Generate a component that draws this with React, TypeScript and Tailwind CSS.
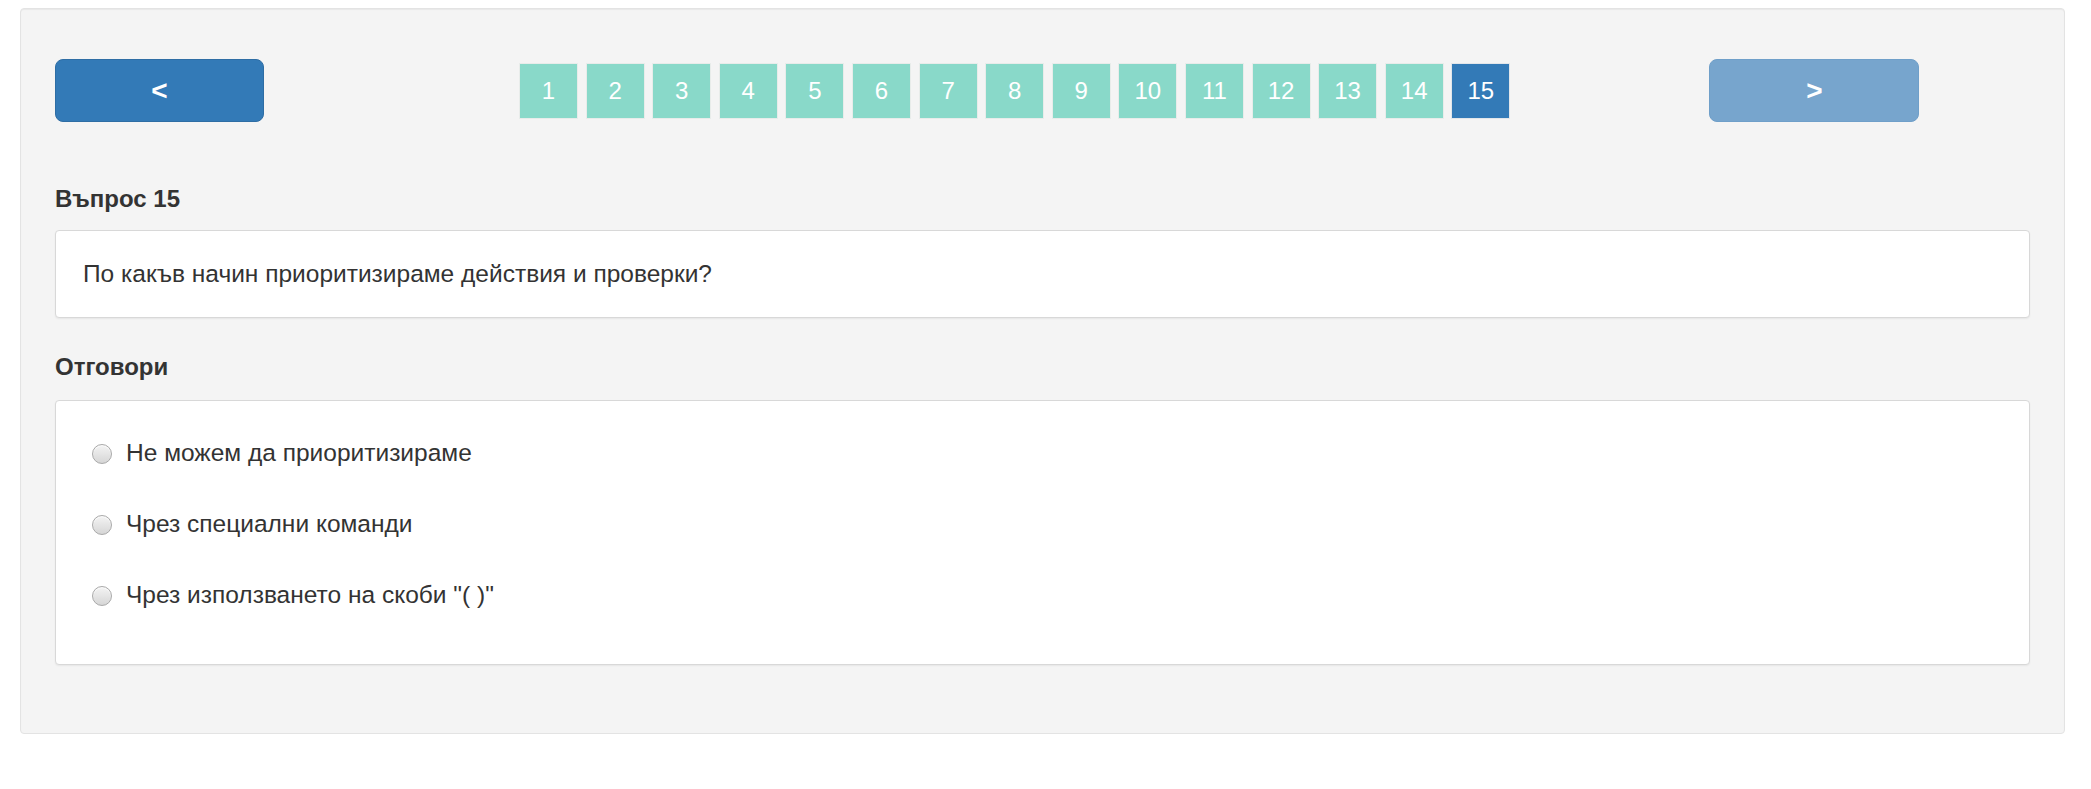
const pages = Array.from({ length: 15 }, (_, i) => i + 1);
const current = 15;

const answers = [
  "Не можем да приоритизираме",
  "Чрез специални команди",
  'Чрез използването на скоби "( )"',
];

function Radio() {
  return (
    <span className="block w-[20px] h-[20px] shrink-0 rounded-full border border-[#a9a9a9] bg-gradient-to-b from-[#f4f4f4] to-[#d6d6d6] shadow-[inset_0_1px_1px_rgba(255,255,255,0.8)]" />
  );
}

export default function App() {
  return (
    <div
      className="min-h-[789px] bg-white pt-[8px] text-[#333]"
      style={{ fontFamily: '"Liberation Sans", Arial, sans-serif' }}
    >
      <div className="ml-[20px] w-[2045px] rounded-[4px] border border-[#e3e3e3] bg-[#f4f4f4] pt-[50px] pb-[68px] pl-[34px] pr-[34px] shadow-[inset_0_1px_1px_rgba(0,0,0,0.05)]">
        {/* навигация */}
        <div className="flex h-[63px] items-center">
          <button className="flex h-[63px] w-[209px] items-center justify-center rounded-[8px] border border-[#2e6da4] bg-[#337ab7] text-[28px] font-bold text-white">
            &lt;
          </button>
          <div className="ml-[255px] flex gap-[7.6px]">
            {pages.map((p) => (
              <div
                key={p}
                className={
                  p === current
                    ? "flex h-[56px] w-[59px] items-center justify-center border border-[#e2e6ea] bg-[#337ab7] text-[24px] text-white"
                    : "flex h-[56px] w-[59px] items-center justify-center border border-[#e8ecea] bg-[#89d9c9] text-[24px] text-white"
                }
              >
                {p}
              </div>
            ))}
          </div>
          <button className="ml-[199px] flex h-[63px] w-[210px] items-center justify-center rounded-[8px] border border-[#6f9fc9] bg-[#77a5cd] text-[28px] font-bold text-white">
            &gt;
          </button>
        </div>

        {/* въпрос */}
        <div className="mt-[62px] mb-[16px] h-[30px] text-[24px] font-bold leading-[30px]">
          Въпрос 15
        </div>
        <div className="flex h-[88px] items-center rounded-[4px] border border-[#d8d8d8] bg-white px-[27px] text-[24.5px] shadow-[0_1px_2px_rgba(0,0,0,0.06)]">
          По какъв начин приоритизираме действия и проверки?
        </div>

        {/* отговори */}
        <div className="mt-[34px] mb-[18px] h-[30px] text-[24px] font-bold leading-[30px]">
          Отговори
        </div>
        <div className="rounded-[4px] border border-[#d8d8d8] bg-white pt-[17px] pb-[33px] pl-[36px] shadow-[0_1px_2px_rgba(0,0,0,0.06)]">
          {answers.map((a) => (
            <label key={a} className="flex h-[71px] items-center gap-[14px] text-[24.5px]">
              <Radio />
              <span>{a}</span>
            </label>
          ))}
        </div>
      </div>
    </div>
  );
}
